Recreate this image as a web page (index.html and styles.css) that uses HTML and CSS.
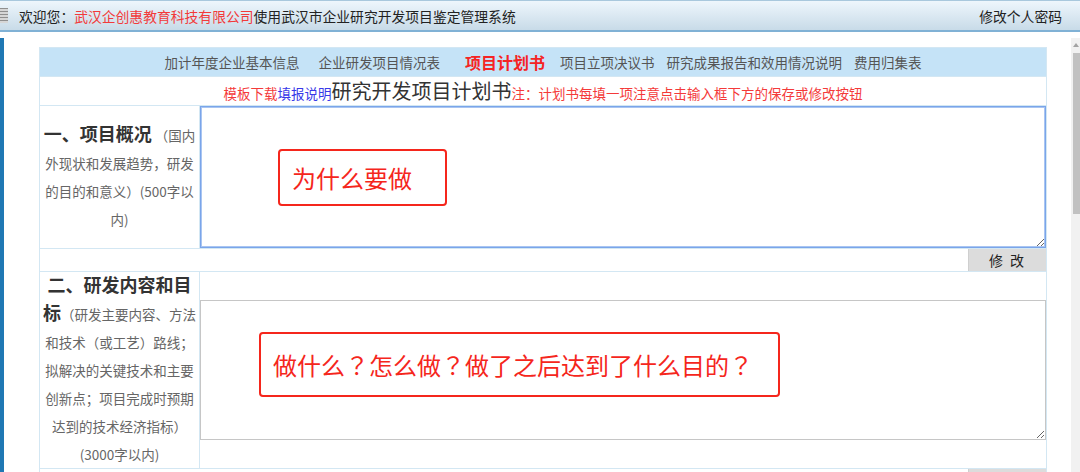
FILE: index.html
```html
<!DOCTYPE html>
<html lang="zh-CN">

<head>
  <meta charset="UTF-8">
  <meta name="viewport" content="width=device-width, initial-scale=1.0">
  <title>研究开发项目计划书</title>
  <link rel="stylesheet" href="styles.css">
</head>

<body>
  <div class="topbar">
    <span class="grip"></span>
    <span class="welcome">欢迎您：<span class="company">武汉企创惠教育科技有限公司</span>使用武汉市企业研究开发项目鉴定管理系统</span>
    <a class="pwd" href="#">修改个人密码</a>
  </div>

  <div class="frame">
    <div class="rail"></div>
    <div class="content">
      <table class="plan">
        <colgroup>
          <col class="col-label">
          <col>
        </colgroup>
        <tr class="nav">
          <td colspan="2">
            <a href="#" class="first">加计年度企业基本信息</a>
            <a href="#">企业研发项目情况表</a>
            <a href="#" class="active">项目计划书</a>
            <a href="#">项目立项决议书</a>
            <a href="#">研究成果报告和效用情况说明</a>
            <a href="#">费用归集表</a>
          </td>
        </tr>
        <tr class="title">
          <td colspan="2"><a href="#" class="tpl">模板下载</a><a href="#" class="guide">填报说明</a><span class="doc">研究开发项目计划书</span><span class="note">注：计划书每填一项注意点击输入框下方的保存或修改按钮</span></td>
        </tr>
        <tr>
          <td class="label"><b>一、项目概况</b> （国内外现状和发展趋势，研发的目的和意义）(500字以内)</td>
          <td class="field">
            <div class="box">
              <textarea class="tall focused"></textarea>
              <div class="callout c1">为什么要做</div>
            </div>
          </td>
        </tr>
        <tr class="act">
          <td colspan="2"><button>修 改</button></td>
        </tr>
        <tr>
          <td class="label"><b>二、研发内容和目标</b>（研发主要内容、方法和技术（或工艺）路线；拟解决的关键技术和主要创新点；项目完成时预期达到的技术经济指标）(3000字以内)</td>
          <td class="field">
            <div class="box">
              <textarea></textarea>
              <div class="callout c2">做什么<span class="q">？</span>怎么做<span class="q">？</span>做了之后达到了什么目的<span class="q">？</span></div>
            </div>
          </td>
        </tr>
        <tr class="act">
          <td colspan="2"><button>修 改</button></td>
        </tr>
      </table>
    </div>
    <div class="scroll">
      <span class="arrow"></span>
      <span class="thumb"></span>
    </div>
  </div>
</body>

</html>
```

FILE: styles.css
```css
html,
body {
  margin: 0;
  height: 100%;
  overflow: hidden;
}

body {
  font-family: "Noto Sans CJK SC", "Liberation Sans", sans-serif;
  font-size: 13.5px;
  color: #333;
  background: #fff;
}

a {
  text-decoration: none;
}

.topbar {
  display: flex;
  align-items: center;
  height: 29px;
  border-top: 1px solid #a9c8dd;
  border-bottom: 2px solid #80b1d5;
  background: linear-gradient(#eef6fc, #c8dbe8);
  font-size: 13.8px;
  color: #222;
}

.grip {
  width: 8px;
  height: 15px;
  margin-right: 11px;
  background: repeating-linear-gradient(#8f8f8f 0, #8f8f8f 1px, #d6d6d6 1px, #d6d6d6 3px);
}

.company {
  color: #f23a3a;
}

.pwd {
  margin-left: auto;
  margin-right: 18px;
  color: #222;
}

.frame {
  display: flex;
  height: calc(100% - 38px);
  margin-top: 6px;
}

.rail {
  width: 4px;
  background: #1f78b4;
}

.content {
  flex: 1;
  padding: 9px 0 0 35px;
}

.plan {
  width: 1008px;
  border-collapse: collapse;
  table-layout: fixed;
}

.col-label {
  width: 160px;
}

.plan td {
  border: 1px solid #d3e7f3;
  padding: 0;
}

.nav td {
  height: 28px;
  background: #c5e3f7;
  text-align: center;
  font-size: 0;
}

.nav a {
  display: inline-block;
  vertical-align: middle;
  font-size: 13.5px;
  color: #555;
  margin: 0 6px;
}

.nav a.first {
  margin-right: 13px;
}

.nav a.active {
  font-size: 16px;
  font-weight: bold;
  color: #f52424;
  margin: 0 9px 0 19px;
}

.title td {
  height: 28px;
  text-align: center;
  font-size: 0;
}

.title a,
.title span {
  display: inline-block;
  vertical-align: bottom;
  font-size: 13.5px;
  line-height: 24px;
}

.tpl,
.note {
  color: #f43a3a;
}

.guide {
  color: #3838e8;
}

.title .doc {
  font-size: 20px;
  line-height: 28px;
  color: #333;
}

.plan td.label {
  padding: 0 2px;
  text-align: center;
  vertical-align: middle;
  line-height: 28px;
  color: #666;
}

.label b {
  font-size: 18px;
  line-height: 18px;
  color: #333;
}

.field {
  vertical-align: middle;
}

.box {
  position: relative;
}

textarea {
  display: block;
  width: 100%;
  height: 140px;
  box-sizing: border-box;
  margin: 0;
  border: 1px solid #c6c6c6;
  resize: both;
  font-family: inherit;
}

textarea.tall {
  height: 142px;
}

textarea.focused {
  border-color: #7aa5ea;
  box-shadow: 0 0 0 1px #a9c5f1 inset;
}

.callout {
  position: absolute;
  display: flex;
  align-items: center;
  box-sizing: border-box;
  padding-left: 12px;
  border: 2.5px solid #f5261c;
  border-radius: 4px;
  color: #f5261c;
  font-size: 24px;
  white-space: nowrap;
}

.callout .q {
  font-family: "Noto Sans CJK TC", "Noto Sans CJK SC", sans-serif;
}

.c1 {
  left: 78px;
  top: 43px;
  width: 169px;
  height: 57px;
}

.c2 {
  left: 59px;
  top: 32px;
  width: 521px;
  height: 65px;
}

.act td {
  text-align: right;
  height: 22px;
  font-size: 0;
}

.act button {
  width: 78px;
  height: 22px;
  margin: 0;
  border: 0;
  border-left: 1px solid #cfcfcf;
  background: #dcdcdc;
  color: #222;
  font-family: inherit;
  font-size: 14px;
  letter-spacing: 2px;
  vertical-align: top;
}

.scroll {
  position: relative;
  width: 9px;
  background: #f1f1f1;
}

.arrow {
  position: absolute;
  left: 2px;
  top: 5px;
  border: 3px solid transparent;
  border-bottom: 4px solid #a3a3a3;
  border-top: 0;
}

.thumb {
  position: absolute;
  left: 2px;
  right: 0;
  top: 15px;
  height: 161px;
  background: #c1c1c1;
}
```
